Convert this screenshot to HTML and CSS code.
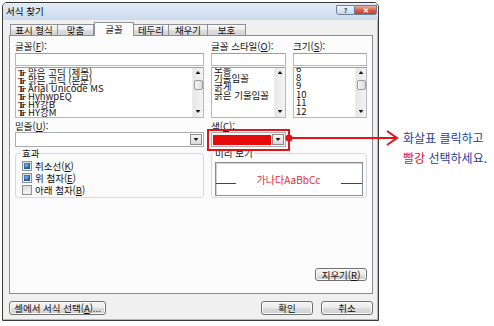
FILE: index.html
```html
<!DOCTYPE html>
<html lang="ko">
<head>
<meta charset="utf-8">
<title>서식 찾기</title>
<link rel="stylesheet" href="styles.css">
</head>
<body>
<div class="dialog">
  <div class="titlebar">
    <span class="title">서식 찾기</span>
    <span class="caps">
      <span class="cap help">?</span>
      <span class="cap close">✕</span>
    </span>
  </div>
  <div class="client">
    <div class="tabs">
      <span class="tab w1">표시 형식</span>
      <span class="tab w2">맞춤</span>
      <span class="tab sel">글꼴</span>
      <span class="tab w4">테두리</span>
      <span class="tab w5">채우기</span>
      <span class="tab w6">보호</span>
    </div>
    <div class="panel">
      <div class="grid">
        <div class="lbl">글꼴(<u>F</u>):</div>
        <div class="lbl">글꼴 스타일(<u>O</u>):</div>
        <div class="lbl">크기(<u>S</u>):</div>

        <div class="combo">
          <div class="textbox"></div>
          <div class="list">
            <div class="items fonts">
              <div class="it"><i class="tt">Tr</i>맑은 고딕 (제목)</div>
              <div class="it"><i class="tt">Tr</i>맑은 고딕 (본문)</div>
              <div class="it"><i class="tt">Tr</i>Arial Unicode MS</div>
              <div class="it"><i class="tt">Tr</i>HyhwpEQ</div>
              <div class="it"><i class="tt">Tr</i>HY강B</div>
              <div class="it"><i class="tt">Tr</i>HY강M</div>
            </div>
            <div class="sb"><i class="ar up"></i><i class="thumb"></i><i class="ar dn"></i></div>
          </div>
        </div>
        <div class="combo">
          <div class="textbox"></div>
          <div class="list">
            <div class="items styles">
              <div class="it">보통</div>
              <div class="it">기울임꼴</div>
              <div class="it">굵게</div>
              <div class="it">굵은 기울임꼴</div>
            </div>
            <div class="sb"><i class="ar up"></i><i class="thumb off"></i><i class="ar dn"></i></div>
          </div>
        </div>
        <div class="combo">
          <div class="textbox"></div>
          <div class="list">
            <div class="items sizes">
              <div class="it">6</div>
              <div class="it">8</div>
              <div class="it">9</div>
              <div class="it">10</div>
              <div class="it">11</div>
              <div class="it">12</div>
            </div>
            <div class="sb"><i class="ar up"></i><i class="thumb"></i><i class="ar dn"></i></div>
          </div>
        </div>

        <div class="lbl lbl2">밑줄(<u>U</u>):</div>
        <div class="lbl lbl2 span2">색(<u>C</u>):</div>

        <div class="dropdown">
          <span class="dd-val"></span>
          <span class="dd-btn"><i class="ar dn"></i></span>
        </div>
        <div class="colorcell">
          <div class="dropdown color">
            <span class="swatch"></span>
            <span class="dd-btn"><i class="ar dn"></i></span>
          </div>
          <div class="redbox"></div>
        </div>
        <div></div>

        <fieldset class="group effects">
          <legend>효과</legend>
          <div class="chk"><span class="cb on"><i></i></span>취소선(<u>K</u>)</div>
          <div class="chk"><span class="cb on"><i></i></span>위 첨자(<u>E</u>)</div>
          <div class="chk"><span class="cb"></span>아래 첨자(<u>B</u>)</div>
        </fieldset>
        <fieldset class="group preview">
          <legend>미리 보기</legend>
          <div class="pvbox">
            <span class="pline"></span>
            <span class="pvtext">가나다AaBbCc</span>
            <span class="pline right"></span>
          </div>
        </fieldset>
      </div>
      <div class="clearrow">
        <span class="btn clear">지우기(<u>R</u>)</span>
      </div>
    </div>
    <div class="footer">
      <span class="btn pick">셀에서 서식 선택(<u>A</u>)...</span>
      <span class="btn ok">확인</span>
      <span class="btn cancel">취소</span>
    </div>
  </div>
</div>

<div class="note">
  <div class="blue">화살표 클릭하고</div>
  <div><span class="red">빨강</span> <span class="blue">선택하세요.</span></div>
</div>

<svg class="arrow" width="120" height="22" viewBox="0 0 120 22">
  <line x1="6" y1="10" x2="113" y2="10" stroke="#e0141a" stroke-width="2"/>
  <circle cx="6" cy="10" r="3.6" fill="#e0141a"/>
  <polyline points="104,3 114,10 104,17" fill="none" stroke="#e0141a" stroke-width="2"/>
</svg>
</body>
</html>
```

FILE: styles.css
```css
* { box-sizing: border-box; }
html, body { margin: 0; }
body {
  width: 494px;
  height: 326px;
  background: #fff;
  position: relative;
  overflow: hidden;
  display: flex;
  align-items: flex-start;
  font-family: "Noto Sans CJK KR", "Noto Sans", sans-serif;
  font-size: 9.5px;
  color: #111;
}
u { text-decoration: underline; text-underline-offset: 1px; }
i { font-style: normal; }

/* window */
.dialog {
  margin: 2px 0 0 2px;
  width: 377px;
  height: 319px;
  border: 1px solid #3b3b3b;
  border-radius: 5px 5px 0 0;
  background: #f0f0f0;
  display: flex;
  flex-direction: column;
  overflow: hidden;
}
.titlebar {
  height: 17px;
  display: flex;
  align-items: flex-start;
  padding-left: 3px;
  background: linear-gradient(#e3ecf6, #cadbee);
}
.title { line-height: 17px; color: #000; }
.caps { margin: 2px 1px 0 auto; display: flex; }
.cap {
  height: 10px;
  display: flex;
  align-items: center;
  justify-content: center;
  font-size: 7px;
  font-weight: bold;
  border: 1px solid #6f8096;
}
.help {
  width: 19px;
  border-radius: 0 0 0 3px;
  color: #2b3f5c;
  background: linear-gradient(#eef3f9, #c9d7e8);
}
.close {
  width: 22px;
  border-left: none;
  border-radius: 0 0 3px 0;
  color: #fff;
  background: linear-gradient(#eab0a3, #d4604a 55%, #c2412d);
}
.client {
  flex: 1;
  display: flex;
  flex-direction: column;
  padding: 2px 4px 0 6px;
  border-right: 1px solid #74d0e4;
  border-bottom: 1px solid #74d0e4;
}

/* tabs */
.tabs { height: 13px; display: flex; align-items: flex-end; padding-left: 1px; }
.tab {
  height: 11px;
  line-height: 10px;
  text-align: center;
  border: 1px solid #8e9199;
  border-bottom: none;
  border-left: none;
  background: linear-gradient(#f7f7f7, #ebebeb 50%, #dedede 51%, #d3d3d3);
  color: #111;
}
.w1 { width: 48px; border-left: 1px solid #8e9199; }
.w2 { width: 36px; }
.w4 { width: 35px; }
.w5 { width: 39px; }
.w6 { width: 38px; }
.sel {
  width: 40px;
  height: 14px;
  margin-bottom: -1px;
  position: relative;
  z-index: 1;
  line-height: 12px;
  border-left: 1px solid #8e9199;
  background: #fbfbfb;
}
.sel + .tab { border-left: none; }

.panel {
  height: 259px;
  border: 1px solid #898c95;
  background: #fbfbfb;
  padding: 5px 0 12px 5px;
  display: flex;
  flex-direction: column;
}
.grid {
  display: grid;
  grid-template-columns: 189px 75px 74px;
  column-gap: 7px;
}
.lbl { line-height: 10px; height: 10px; margin-bottom: 2px; white-space: nowrap; }
.lbl2 { margin: 3px 0 1px; }
.span2 { grid-column: 2 / 4; }

.combo { display: flex; flex-direction: column; }
.textbox { height: 13px; background: #fff; border: 1px solid #b5b8bf; border-top-color: #9b9ea5; }
.list {
  height: 51px;
  margin-top: 1px;
  display: flex;
  background: #fff;
  border: 1px solid #b5b8bf;
  border-top-color: #9b9ea5;
  overflow: hidden;
}
.items { flex: 1; padding-left: 2px; overflow: hidden; }
.it { height: 8px; line-height: 8px; white-space: nowrap; }
.tt {
  display: inline-block;
  width: 10px;
  font-family: "Liberation Serif", serif;
  font-weight: bold;
  font-size: 9px;
  letter-spacing: -1.5px;
  color: #222;
}
.styles { margin-top: -3px; }
.styles .it { height: 8.7px; line-height: 8.7px; }
.sizes { margin-top: -4px; padding-left: 2px; }
.sizes .it { height: 8.6px; line-height: 8.6px; }

.sb {
  width: 11px;
  display: flex;
  flex-direction: column;
  align-items: center;
  padding: 3px 0 4px;
  background: linear-gradient(90deg, #e6e6e6, #f4f4f4);
  border-left: 1px solid #ededed;
}
.ar { display: block; width: 5px; height: 3px; background: #1a1a1a; }
.up { clip-path: polygon(50% 0, 100% 100%, 0 100%); }
.dn { clip-path: polygon(0 0, 100% 0, 50% 100%); margin-top: auto; }
.thumb {
  display: block;
  width: 9px;
  height: 10px;
  margin-top: 6px;
  border: 1px solid #9a9a9a;
  border-radius: 2px;
  background: linear-gradient(90deg, #f6f6f6, #dcdcdc);
}
.thumb.off { visibility: hidden; }

.dropdown {
  height: 15px;
  display: flex;
  align-items: center;
  background: #fff;
  border: 1px solid #a9acb3;
  padding: 1px;
}
.dd-val { flex: 1; }
.dd-btn {
  width: 12px;
  height: 11px;
  margin-left: 1px;
  display: flex;
  align-items: center;
  justify-content: center;
  border: 1px solid #8c8c8c;
  background: linear-gradient(#f7f7f7, #d9d9d9);
}
.dd-btn .ar { margin-top: 0; }
.colorcell { position: relative; }
.color { background: #f3f3f3; }
.swatch { flex: 1; height: 10px; background: #e50b0b; }
.redbox {
  position: absolute;
  left: -4px;
  top: -3px;
  right: -4px;
  bottom: -4px;
  border: 2px solid #e2141b;
}

.group {
  margin: 1px 0 0;
  min-width: 0;
  border: 1px solid #d3dbe2;
  border-radius: 3px;
}
.group legend {
  padding: 0 1px;
  margin-left: -1px;
  line-height: 10px;
  height: 10px;
}
.effects { padding: 2px 0 1px 6px; }
.chk { height: 12px; display: flex; align-items: center; white-space: nowrap; }
.cb {
  width: 10px;
  height: 10px;
  margin-right: 3px;
  padding: 1px;
  border: 1px solid #8f8f8f;
  background: linear-gradient(#dcdcdc, #f6f6f6);
}
.cb.on i {
  display: block;
  width: 6px;
  height: 6px;
  background: radial-gradient(circle at 40% 35%, #7fb6ec, #2060b0 60%, #163f80);
}
.preview { grid-column: 2 / 4; padding: 4px 3px 1px 3px; }
.pvbox {
  height: 34px;
  display: flex;
  align-items: center;
  background: #fff;
  border: 1px solid #8e8e8e;
  box-shadow: inset 1px 1px 0 #cfcfcf;
}
.pline { width: 20px; height: 1px; background: #444; margin-top: 8px; }
.pline.right { width: 21px; }
.pvtext { flex: 1; text-align: center; color: #e8283a; font-size: 10px; }

.clearrow { margin-top: auto; display: flex; justify-content: flex-end; padding-right: 5px; }

.btn {
  height: 13px;
  display: flex;
  align-items: center;
  justify-content: center;
  border: 1px solid #707070;
  border-radius: 3px;
  background: linear-gradient(#f4f4f4, #ebebeb 50%, #dddddd 51%, #cfcfcf);
  box-shadow: inset 0 0 0 1px #fbfbfb;
  white-space: nowrap;
  color: #111;
}
.clear { width: 52px; }
.footer { display: flex; margin-top: 7px; }
.footer .btn { height: 14px; }
.pick { width: 97px; }
.ok { width: 52px; margin-left: auto; }
.cancel { width: 52px; margin-left: 8px; }

/* annotation */
.note {
  margin: 128px 0 0 24px;
  font-size: 12px;
  line-height: 20px;
  white-space: nowrap;
}
.blue { color: #1d3d9e; }
.red { color: #e3121b; }
.arrow { position: absolute; left: 283px; top: 128px; }
```
